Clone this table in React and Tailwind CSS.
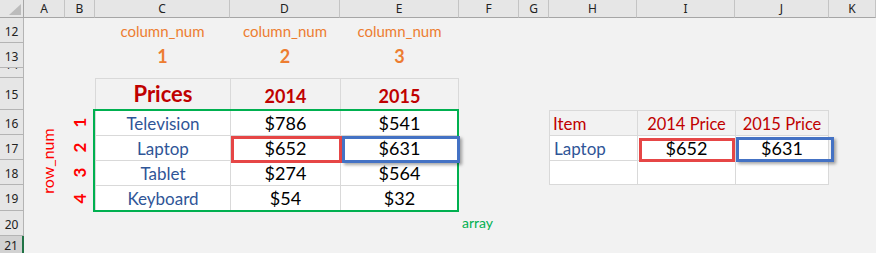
import React from 'react';

const COLS = ['A', 'B', 'C', 'D', 'E', 'F', 'G', 'H', 'I', 'J', 'K'];
const ROWS = [12, 13, 14, 15, 16, 17, 18, 19, 20, 21];

const line = 'border-[#d9d9d9]';

// cells of the sheet, keyed by address
const cells = {
    C12: { cls: 'items-end justify-center pb-[4px] text-[15px] text-[#ed7d31]', text: 'column_num' },
    D12: { cls: 'items-end justify-center pb-[4px] text-[15px] text-[#ed7d31]', text: 'column_num' },
    E12: { cls: 'items-end justify-center pb-[4px] text-[15px] text-[#ed7d31]', text: 'column_num' },
    C13: { cls: 'items-end justify-center pb-[3px] text-[18px] font-bold text-[#ed7d31]', text: '1' },
    D13: { cls: 'items-end justify-center pb-[3px] text-[18px] font-bold text-[#ed7d31]', text: '2' },
    E13: { cls: 'items-end justify-center pb-[3px] text-[18px] font-bold text-[#ed7d31]', text: '3' },

    C15: { cls: `items-end justify-center pb-[5px] text-[22px] font-bold text-[#c00000] border-l border-t ${line}`, text: 'Prices' },
    D15: { cls: `items-end justify-center pb-[5px] text-[18px] font-bold text-[#c00000] border-l border-t ${line}`, text: '2014' },
    E15: { cls: `items-end justify-center pb-[5px] text-[18px] font-bold text-[#c00000] border-l border-t border-r ${line}`, text: '2015' },

    A16: { cls: 'row-span-4 items-center justify-center pl-[6px]', rot: 'text-[16px] text-[#ff0000]', text: 'row_num' },
    B16: { cls: 'items-center justify-center', rot: 'text-[17px] font-bold text-[#ff0000]', text: '1' },
    B17: { cls: 'items-center justify-center', rot: 'text-[17px] font-bold text-[#ff0000]', text: '2' },
    B18: { cls: 'items-center justify-center', rot: 'text-[17px] font-bold text-[#ff0000]', text: '3' },
    B19: { cls: 'items-center justify-center', rot: 'text-[17px] font-bold text-[#ff0000]', text: '4' },

    C16: { cls: `items-end justify-center pb-[3px] bg-white text-[17px] text-[#2f5597] border-l border-t ${line}`, text: 'Television' },
    D16: { cls: `items-end justify-center pb-[3px] bg-white text-[18px] text-black border-l border-t ${line}`, text: '$786' },
    E16: { cls: `items-end justify-center pb-[3px] bg-white text-[18px] text-black border-l border-t border-r ${line}`, text: '$541' },
    C17: { cls: `items-end justify-center pb-[3px] bg-white text-[17px] text-[#2f5597] border-l border-t ${line}`, text: 'Laptop' },
    D17: { cls: `items-end justify-center pb-[3px] bg-white text-[18px] text-black border-l border-t ${line}`, text: '$652' },
    E17: { cls: `items-end justify-center pb-[3px] bg-white text-[18px] text-black border-l border-t border-r ${line}`, text: '$631' },
    C18: { cls: `items-end justify-center pb-[3px] bg-white text-[17px] text-[#2f5597] border-l border-t ${line}`, text: 'Tablet' },
    D18: { cls: `items-end justify-center pb-[3px] bg-white text-[18px] text-black border-l border-t ${line}`, text: '$274' },
    E18: { cls: `items-end justify-center pb-[3px] bg-white text-[18px] text-black border-l border-t border-r ${line}`, text: '$564' },
    C19: { cls: `items-end justify-center pb-[3px] bg-white text-[17px] text-[#2f5597] border-l border-t border-b ${line}`, text: 'Keyboard' },
    D19: { cls: `items-end justify-center pb-[3px] bg-white text-[18px] text-black border-l border-t border-b ${line}`, text: '$54' },
    E19: { cls: `items-end justify-center pb-[3px] bg-white text-[18px] text-black border-l border-t border-r border-b ${line}`, text: '$32' },

    F20: { cls: 'items-end justify-start pl-[3px] pb-[6px] text-[14px] text-[#00b050]', text: 'array' },

    H16: { cls: `items-end justify-start pl-[3px] pb-[3px] text-[17px] text-[#c00000] border-l border-t ${line}`, text: 'Item' },
    I16: { cls: `items-end justify-center pb-[3px] text-[16.5px] text-[#c00000] border-l border-t ${line}`, text: '2014 Price' },
    J16: { cls: `items-end justify-center pb-[3px] text-[16.5px] text-[#c00000] border-l border-t border-r ${line}`, text: '2015 Price' },
    H17: { cls: `items-end justify-start pl-[4px] pb-[3px] bg-white text-[17px] text-[#2f5597] border-l border-t ${line}`, text: 'Laptop' },
    I17: { cls: `items-end justify-center pb-[3px] bg-white text-[18px] text-black border-l border-t ${line}`, text: '$652' },
    J17: { cls: `items-end justify-center pb-[3px] bg-white text-[18px] text-black border-l border-t border-r ${line}`, text: '$631' },
    H18: { cls: `bg-white border-l border-t border-b ${line}` },
    I18: { cls: `bg-white border-l border-t border-b ${line}` },
    J18: { cls: `bg-white border-l border-t border-r border-b ${line}` },
};

// A17:A19 are covered by the merged A16
const merged = new Set(['A17', 'A18', 'A19']);

function RowHead({ n }) {
    if (n === 14) {
        return (
            <div className="flex justify-center overflow-hidden bg-[#e6e6e6] border-r border-b border-[#b4b4b4]">
                <span className="-mt-[9px] leading-[12px]">14</span>
            </div>
        );
    }
    if (n === 21) {
        return (
            <div className="flex items-start justify-center overflow-hidden bg-[#d2d2d2] border-r-2 border-[#217346]">
                <span className="mt-[3px] leading-[14px]">21</span>
            </div>
        );
    }
    return (
        <div className="flex items-center justify-center pt-[3px] bg-[#e6e6e6] border-r border-b border-[#b4b4b4]">
            {n}
        </div>
    );
}

export default function App() {
    return (
        <div className="relative h-[253px] w-[876px] overflow-hidden bg-[#f2f2f2]">
            <div className="grid grid-cols-[24px_41px_30px_135px_110px_119px_60px_30px_88px_98px_94px_47px] grid-rows-[18px_25px_25px_10px_32px_25px_25px_25px_26px_25px_17px] font-['Lato',sans-serif] leading-none">
                {/* corner */}
                <div className="bg-[#e6e6e6] border-r border-b border-[#a6a6a6]">
                    <svg width="23" height="17" viewBox="0 0 23 17">
                        <polygon points="21,4 21,15 9,15" fill="#bcbcbc" />
                    </svg>
                </div>
                {COLS.map((c) => (
                    <div
                        key={c}
                        className="flex items-center justify-center bg-[#e6e6e6] border-r border-b border-r-[#c4c4c4] border-b-[#a6a6a6] font-['Noto_Sans',sans-serif] text-[12px] text-[#222]"
                    >
                        {c}
                    </div>
                ))}

                {ROWS.map((n) => (
                    <React.Fragment key={n}>
                        <div className="contents font-['Noto_Sans',sans-serif] text-[12px] text-[#222]">
                            <RowHead n={n} />
                        </div>
                        {COLS.map((c) => {
                            const addr = c + n;
                            if (merged.has(addr)) return null;
                            const cell = cells[addr];
                            if (!cell) return <div key={addr} />;
                            return (
                                <div key={addr} className={`flex whitespace-nowrap ${cell.cls}`}>
                                    {cell.rot ? (
                                        <span className={`-rotate-90 whitespace-nowrap ${cell.rot}`}>{cell.text}</span>
                                    ) : (
                                        cell.text
                                    )}
                                </div>
                            );
                        })}
                    </React.Fragment>
                ))}
            </div>

            {/* green outline round the array */}
            <div className="pointer-events-none absolute left-[93px] top-[109px] h-[103px] w-[366px] border-2 border-[#00b050]" />

            {/* selection boxes, left table */}
            <div className="pointer-events-none absolute left-[231px] top-[136px] h-[27px] w-[111px] border-[3px] border-[#e64646]" />
            <div className="pointer-events-none absolute left-[342px] top-[136px] h-[27px] w-[118px] border-[3px] border-[#4472c4] shadow-[2px_2px_3px_rgba(0,0,0,0.35)]" />

            {/* selection boxes, right table */}
            <div className="pointer-events-none absolute left-[639px] top-[138px] h-[24px] w-[96px] border-[3px] border-[#e64646]" />
            <div className="pointer-events-none absolute left-[736px] top-[137px] h-[25px] w-[98px] border-[3px] border-[#4472c4] shadow-[2px_2px_3px_rgba(0,0,0,0.35)]" />
        </div>
    );
}
